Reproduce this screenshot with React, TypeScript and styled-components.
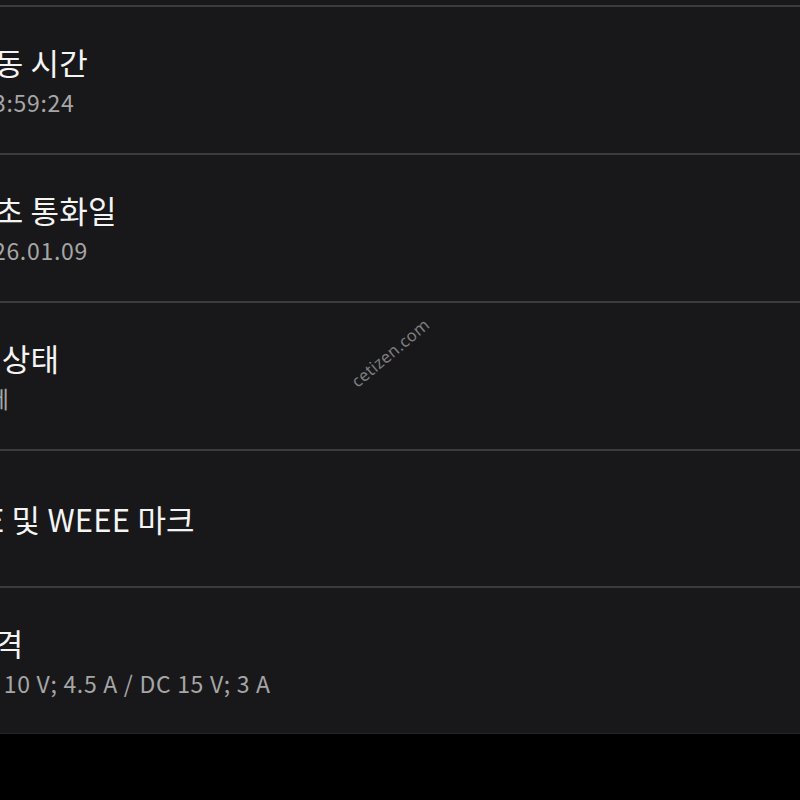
import React from 'react'
import styled, { createGlobalStyle } from 'styled-components'

const GlobalStyle = createGlobalStyle`
    html, body {
        margin:0;
        padding:0;
        background:#000;
        overflow:hidden;
    }
`

const Screen = styled.div`
    position:relative;
    width:800px;
    height:800px;
    background:#000;
    font-family:"Noto Sans CJK KR", "Noto Sans", sans-serif;
    overflow:hidden;
`

const List = styled.div`
    background:#18181a;
    padding-top:5px;
    border-bottom:1px solid #26262a;
`

const TopLine = styled.div`
    height:2px;
    background:#3b3b3e;
`

const Row = styled.div<{ $single?: boolean; $last?: boolean }>`
    display:flex;
    flex-direction:column;
    justify-content:center;
    box-sizing:border-box;
    min-height:${p => p.$single ? 137 : p.$last ? 145 : 148}px;
    border-bottom:${p => p.$last ? 'none' : '2px solid #3b3b3e'};
    overflow:hidden;
`

const TextBlock = styled.div`
    margin-left:-34px;
    white-space:nowrap;
`

const Title = styled.div`
    color:#f4f4f4;
    font-size:31px;
    line-height:40px;
    letter-spacing:0.2px;
`

const Value = styled.div`
    color:#a6a6a6;
    font-size:23px;
    line-height:32px;
    letter-spacing:0.7px;
    margin-top:4px;
`

const Watermark = styled.div`
    position:absolute;
    left:342px;
    top:341px;
    color:#909092;
    font-family:"Noto Sans", sans-serif;
    font-size:16.5px;
    letter-spacing:0.3px;
    transform:rotate(-40deg);
    opacity:0.85;
`

interface IItem {
    title: string
    value?: string
}

const items: IItem[] = [
    { title: '작동 시간', value: '103:59:24' },
    { title: '최초 통화일', value: '2026.01.09' },
    { title: '앱 상태', value: '해제' },
    { title: 'CE 및 WEEE 마크' },
    { title: '정격', value: 'DC 10 V; 4.5 A / DC 15 V; 3 A' },
]

const App: React.FC = () => {
    return <Screen>
        <GlobalStyle />
        <List>
            <TopLine />
            {items.map((item, i) => {
                return <Row key={i} $single={!item.value} $last={i === items.length - 1}>
                    <TextBlock>
                        <Title>{item.title}</Title>
                        {item.value && <Value>{item.value}</Value>}
                    </TextBlock>
                </Row>
            })}
        </List>
        <Watermark>cetizen.com</Watermark>
    </Screen>
}

export default App
